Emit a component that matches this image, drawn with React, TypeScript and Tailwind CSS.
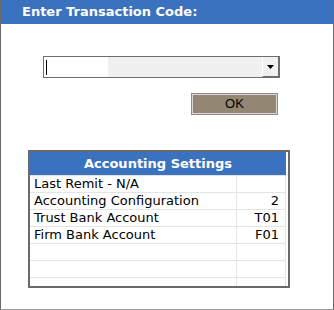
import React from "react";

const rows: [string, string][] = [
  ["Last Remit - N/A", ""],
  ["Accounting Configuration", "2"],
  ["Trust Bank Account", "T01"],
  ["Firm Bank Account", "F01"],
  ["", ""],
  ["", ""],
  ["", ""],
];

export default function App() {
  return (
    <div
      className="w-[334px] h-[310px] bg-white flex flex-col border-l border-r border-b border-l-[#6a6a6a] border-r-[#6a6a6a] border-b-[#9a9a9a] overflow-hidden"
      style={{ fontFamily: '"DejaVu Sans", Verdana, sans-serif' }}
    >
      <div className="h-[24px] bg-[#3b72c0] flex items-center pl-[21px] text-white font-bold text-[13px] shrink-0">
        Enter Transaction Code:
      </div>
      <div className="flex flex-col pl-[42px] pt-[32px]">
        <div className="w-[237px] h-[22px] border border-[#6e6e6e] flex bg-white">
          <div className="w-[64px] flex items-center pl-[2px]">
            <div className="w-[1px] h-[15px] bg-black" />
          </div>
          <div className="flex-1 bg-[#f0f0f0]" />
          <div className="w-[17px] bg-[#f0f0f0] border-l border-l-white border-r border-r-[#6e6e6e] border-b border-b-[#6e6e6e] flex items-center justify-center">
            <svg width="7" height="4" viewBox="0 0 7 4">
              <polygon points="0,0 7,0 3.5,4" fill="#000" />
            </svg>
          </div>
        </div>
        <div className="flex pl-[149px] pt-[16px]">
          <div
            className="w-[85px] h-[20px] bg-[#938672] border border-[#d8d8d8] outline outline-1 outline-[#8a8a8a] flex items-center justify-center text-[13px] text-black"
            style={{ fontFamily: '"Liberation Sans", Arial, sans-serif' }}
          >
            OK
          </div>
        </div>
        <div className="-ml-[15px] mt-[36px] w-[262px] h-[138px] border-2 border-[#6a6a6a] overflow-hidden">
          <div className="h-[23px] w-[256px] bg-[#3b72c0] text-white font-bold text-[13px] flex items-center justify-center">
            Accounting Settings
          </div>
          <div className="w-[256px]">
            {rows.map(([a, b], i) => (
              <div
                key={i}
                className="flex h-[17px] border-t border-[#e4e4e4] text-[13px] text-black leading-[16px]"
              >
                <div className="w-[207px] pl-[4px] border-r border-[#e4e4e4] whitespace-nowrap">{a}</div>
                <div className="w-[49px] text-right pr-[6px] border-r border-[#e4e4e4] whitespace-nowrap">{b}</div>
              </div>
            ))}
          </div>
        </div>
      </div>
    </div>
  );
}
